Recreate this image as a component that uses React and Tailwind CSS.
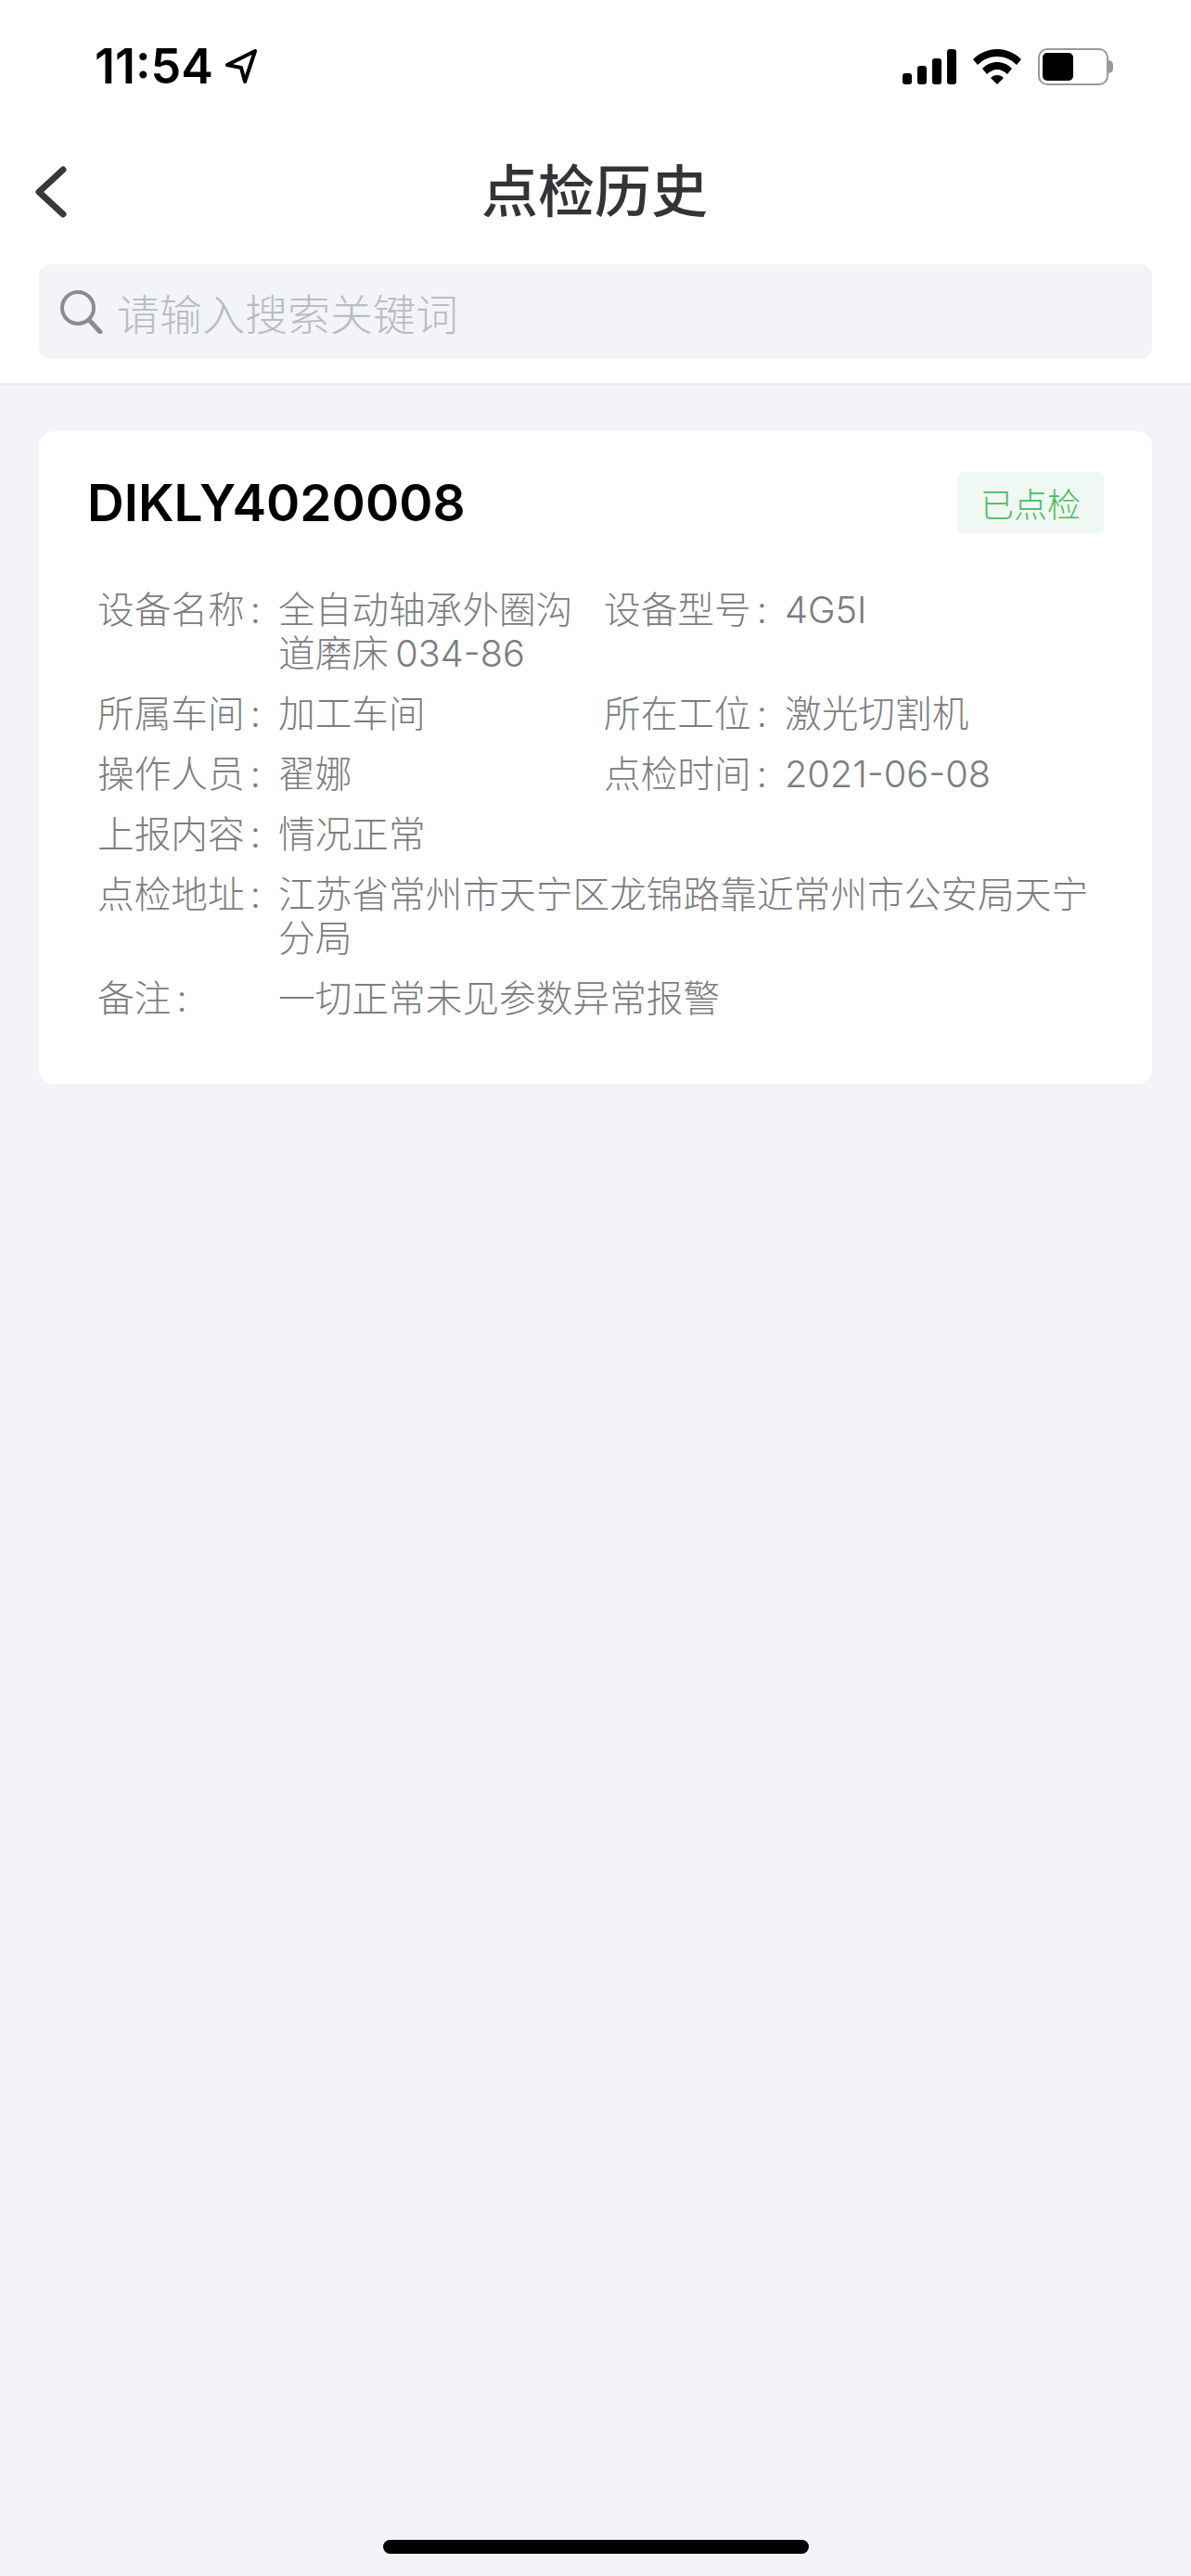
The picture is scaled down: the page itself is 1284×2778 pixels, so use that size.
const cjk = { fontFamily: '"Noto Sans CJK SC", sans-serif' };
const latin = { fontFamily: 'Inter, "Noto Sans CJK SC", sans-serif' };

function Field({ label, value, className = "" }) {
  return (
    <div className={`flex items-start ${className}`}>
      <div className="w-[195px] shrink-0 whitespace-nowrap"><span>{label}</span><span className="ml-[6px]">:</span></div>
      <div className="min-w-0 flex-1">{value}</div>
    </div>
  );
}

function StatusBar() {
  return (
    <div className="flex h-[72px] items-center justify-between pl-[102px] pr-[84px]">
      <div className="flex items-center gap-[12px]">
        <span className="text-[52px] leading-none font-semibold text-black" style={latin}>11:54</span>
        <svg width="36" height="40" viewBox="0 0 36 40" fill="none">
          <path d="M3 18 L33 3 L22 36 L18 21 Z" stroke="#000" strokeWidth="4" strokeLinejoin="round" />
        </svg>
      </div>
      <div className="flex items-center gap-[18px]">
        <svg width="58" height="38" viewBox="0 0 58 38" fill="#000">
          <rect x="0" y="26" width="10" height="12" rx="3" />
          <rect x="16" y="18" width="10" height="20" rx="3" />
          <rect x="32" y="10" width="10" height="28" rx="3" />
          <rect x="48" y="0" width="10" height="38" rx="3" />
        </svg>
        <svg width="52" height="38" viewBox="0 0 52 38" fill="#000">
          <path d="M26 0 C36 0 45 4 52 11 L47 17 C41 11 34 8 26 8 C18 8 11 11 5 17 L0 11 C7 4 16 0 26 0 Z" />
          <path d="M26 14 C32 14 37 16 42 21 L37 27 C34 24 30 22 26 22 C22 22 18 24 15 27 L10 21 C15 16 20 14 26 14 Z" />
          <path d="M26 28 C29 28 31 29 33 31 L26 38 L19 31 C21 29 23 28 26 28 Z" />
        </svg>
        <div className="flex items-center">
          <div className="flex h-[40px] w-[76px] items-center rounded-[10px] border-[2px] border-[#999999] p-[3px]">
            <div className="h-[30px] w-[33px] rounded-[5px] bg-black" />
          </div>
          <div className="h-[14px] w-[5px] rounded-r-full bg-[#999999]" />
        </div>
      </div>
    </div>
  );
}

function Header() {
  return (
    <div className="bg-white border-b-2 border-[#eaebee]">
      <div className="pt-[36px]"><StatusBar /></div>
      <div className="relative mt-[49px] flex h-[90px] items-center justify-center pr-[2px]">
        <svg className="absolute left-[34px] top-[14px]" width="44" height="64" viewBox="0 0 44 64" fill="none">
          <path d="M34 12 L8 36 L34 60" stroke="#37383c" strokeWidth="7" strokeLinecap="round" strokeLinejoin="round" />
        </svg>
        <span className="text-[61px] leading-none font-medium text-[#333437]" style={cjk}>点检历史</span>
      </div>
      <div className="px-[42px] pt-[38px] pb-[26px]">
        <div className="flex h-[102px] items-center rounded-[12px] bg-[#f3f4f8] pl-[22px]">
          <svg className="shrink-0" width="48" height="48" viewBox="0 0 48 48" fill="none">
            <circle cx="20" cy="20" r="17" stroke="#8b8c8f" strokeWidth="4" />
            <path d="M32 33 L44 46" stroke="#8b8c8f" strokeWidth="5" strokeLinecap="round" />
          </svg>
          <span className="ml-[14px] text-[46px] leading-none font-light text-[#bbbcc0]" style={cjk}>请输入搜索关键词</span>
        </div>
      </div>
    </div>
  );
}

function Card() {
  return (
    <div className="rounded-[16px] bg-white pt-[44px] pr-[52px] pb-[68px] pl-[52px]">
      <div className="flex items-center justify-between">
        <span className="text-[55px] leading-none font-semibold text-black" style={latin}>DIKLY4020008</span>
        <span className="flex h-[66px] w-[158px] items-center justify-center rounded-[6px] bg-[#eff8f3] text-[36px] font-light text-[#4cbb5f]" style={cjk}>已点检</span>
      </div>
      <div className="mt-[60px] flex flex-col gap-[18px] pl-[11px] text-[39.7px] leading-[47px] font-light text-[#7c7d80]" style={latin}>
        <div className="grid grid-cols-[546px_1fr]">
          <Field label="设备名称" value={"全自动轴承外圈沟道磨床\u2009034-86"} className="pr-[8px]" />
          <Field label="设备型号" value="4G5I" />
        </div>
        <div className="grid grid-cols-[546px_1fr]">
          <Field label="所属车间" value="加工车间" />
          <Field label="所在工位" value="激光切割机" />
        </div>
        <div className="grid grid-cols-[546px_1fr]">
          <Field label="操作人员" value="翟娜" />
          <Field label="点检时间" value="2021-06-08" />
        </div>
        <Field label="上报内容" value="情况正常" />
        <Field label="点检地址" value="江苏省常州市天宁区龙锦路靠近常州市公安局天宁分局" />
        <Field label="备注" value="一切正常未见参数异常报警" />
      </div>
    </div>
  );
}

export default function App() {
  return (
    <div className="relative flex h-[2778px] w-[1284px] flex-col overflow-hidden bg-[#f3f4f8]">
      <Header />
      <div className="px-[42px] pt-[50px]"><Card /></div>
      <div className="absolute bottom-[24px] left-[413px] h-[15px] w-[459px] rounded-full bg-black" />
    </div>
  );
}
